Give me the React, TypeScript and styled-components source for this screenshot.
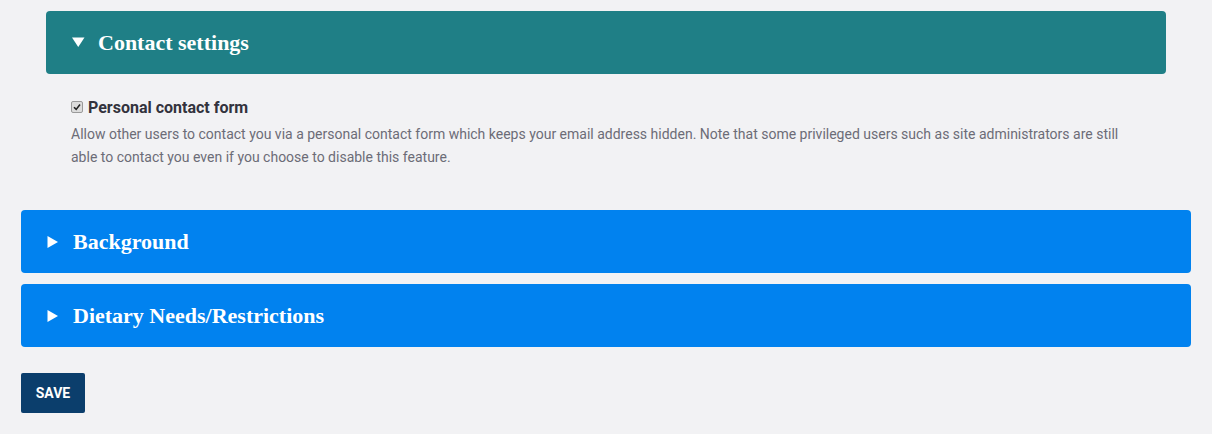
import React from "react";
import styled, { createGlobalStyle } from "styled-components";

const Global = createGlobalStyle`
  html, body { margin: 0; padding: 0; background: #f2f2f4; }
  body { font-family: Roboto, "Liberation Sans", Arial, sans-serif; }
`;

const Page = styled.div`
  padding: 11px 21px 20px 21px;
  display: flex;
  flex-direction: column;
`;

const Group = styled.div`
  padding: 0 25px 0 25px;
  margin-bottom: 41px;
`;

const Summary = styled.div<{ $tone: "teal" | "blue" }>`
  height: 63px;
  box-sizing: border-box;
  border-radius: 4px;
  background: ${(p) => (p.$tone === "teal" ? "#1f7f86" : "#0182ef")};
  color: #fff;
  display: flex;
  align-items: center;
  padding-left: 26px;
  gap: 13px;
  margin-bottom: 11px;
  font-family: "Liberation Serif", "Times New Roman", serif;
  font-weight: 700;
  font-size: 22px;
`;

const Arrow = styled.svg`
  width: 13px;
  height: 13px;
  flex: none;
  fill: #fff;
`;

const Body = styled.div`
  padding: 12px 25px 0 25px;
`;

const CheckRow = styled.label`
  display: flex;
  align-items: center;
  gap: 5px;
  font-size: 16px;
  font-weight: 700;
  color: #33333d;
  height: 20px;
`;

const Box = styled.span`
  width: 10px;
  height: 10px;
  border: 1px solid #9a9a9a;
  border-radius: 2px;
  background: #dcdcdc;
  display: inline-flex;
  align-items: center;
  justify-content: center;
  flex: none;
`;

const Desc = styled.p`
  margin: 6px 0 0 0;
  font-size: 14px;
  line-height: 23px;
  color: #6c6c77;
  max-width: 1070px;
`;

const SaveButton = styled.button`
  align-self: flex-start;
  margin-top: 15px;
  width: 64px;
  height: 40px;
  border: none;
  border-radius: 2px;
  background: #0b3e6c;
  color: #fff;
  font-family: Roboto, "Liberation Sans", sans-serif;
  font-weight: 700;
  font-size: 14px;
  padding: 0;
`;

const Down = () => (
  <Arrow viewBox="0 0 13 13">
    <polygon points="0,1.5 12.5,1.5 6.25,11" />
  </Arrow>
);

const Right = () => (
  <Arrow viewBox="0 0 13 13">
    <polygon points="0.5,1 11,7 0.5,13" />
  </Arrow>
);

export default function App() {
  return (
    <>
      <Global />
      <Page>
        <Group>
          <Summary $tone="teal">
            <Down />
            Contact settings
          </Summary>
          <Body>
            <CheckRow>
              <Box>
                <svg width="8" height="8" viewBox="0 0 8 8">
                  <path d="M1 4.2 L3.2 6.4 L7 1.6" stroke="#222" strokeWidth="1.6" fill="none" />
                </svg>
              </Box>
              Personal contact form
            </CheckRow>
            <Desc>
              Allow other users to contact you via a personal contact form which keeps your email address hidden. Note that some privileged users such as site administrators are still able to contact you even if you choose to disable this feature.
            </Desc>
          </Body>
        </Group>
        <Summary $tone="blue">
          <Right />
          Background
        </Summary>
        <Summary $tone="blue">
          <Right />
          Dietary Needs/Restrictions
        </Summary>
        <SaveButton>SAVE</SaveButton>
      </Page>
    </>
  );
}
